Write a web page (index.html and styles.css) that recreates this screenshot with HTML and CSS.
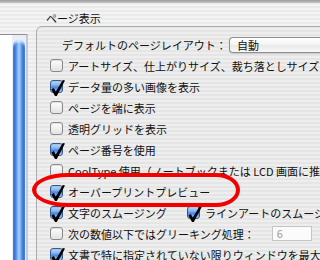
FILE: index.html
```html
<!DOCTYPE html>
<html>
<head>
<title>ページ表示</title>
<link rel="stylesheet" href="styles.css">
</head>

<body>

    <div class="topbar"></div>

    <div class="main">
        <div class="sidebar">
            <div class="list"></div>
            <div class="track"><div class="thumb"></div></div>
        </div>

        <div class="content">
            <div class="title">ページ表示</div>

            <div class="box">
                <div class="row indent">
                    <span class="label-fixed">デフォルトのページレイアウト：</span>
                    <span class="popup">自動</span>
                </div>

                <div class="row"><span class="cb"></span>アートサイズ、仕上がりサイズ、裁ち落としサイズを表示</div>
                <div class="row"><span class="cb on"><svg viewBox="0 -4 15 17"><path d="M1.3 9.5 L3.8 8 L5.8 11.4 L12.8 0 L15 0.5 L6.8 16 L5 16 Z"/></svg></span>データ量の多い画像を表示</div>
                <div class="row"><span class="cb"></span>ページを端に表示</div>
                <div class="row"><span class="cb"></span>透明グリッドを表示</div>
                <div class="row"><span class="cb on"><svg viewBox="0 -4 15 17"><path d="M1.3 9.5 L3.8 8 L5.8 11.4 L12.8 0 L15 0.5 L6.8 16 L5 16 Z"/></svg></span>ページ番号を使用</div>
                <div class="row"><span class="cb"></span>CoolType 使用（ノートブックまたは LCD 画面に推奨）</div>
                <div class="row"><span class="cb on"><svg viewBox="0 -4 15 17"><path d="M1.3 9.5 L3.8 8 L5.8 11.4 L12.8 0 L15 0.5 L6.8 16 L5 16 Z"/></svg></span>オーバープリントプレビュー</div>
                <div class="row">
                    <span class="pair"><span class="cb on"><svg viewBox="0 -4 15 17"><path d="M1.3 9.5 L3.8 8 L5.8 11.4 L12.8 0 L15 0.5 L6.8 16 L5 16 Z"/></svg></span>文字のスムージング</span>
                    <span class="cb on"><svg viewBox="0 -4 15 17"><path d="M1.3 9.5 L3.8 8 L5.8 11.4 L12.8 0 L15 0.5 L6.8 16 L5 16 Z"/></svg></span>ラインアートのスムージング
                </div>
                <div class="row"><span class="cb"></span>次の数値以下ではグリーキング処理：<span class="field">6</span></div>
                <div class="row"><span class="cb on"><svg viewBox="0 -4 15 17"><path d="M1.3 9.5 L3.8 8 L5.8 11.4 L12.8 0 L15 0.5 L6.8 16 L5 16 Z"/></svg></span>文書で特に指定されていない限りウィンドウを最大化</div>
            </div>
        </div>
    </div>

    <!-- red marker round the overprint option -->
    <div class="ring"></div>

</body>
</html>
```

FILE: styles.css
```css
    body {
        margin: 0;
        width: 320px;
        height: 260px;
        overflow: hidden;
        position: relative;
        font-family: "Noto Sans CJK JP", "Noto Sans", sans-serif;
        font-size: 11px;
        color: #111;
        background: repeating-linear-gradient(to bottom, #f3f3f3 0, #f3f3f3 2px, #eaeaea 2px, #eaeaea 4px);
    }

    .topbar {
        height: 3px;
        background: linear-gradient(#9c9c9c, #c6c6c6);
    }

    .main {
        display: flex;
        gap: 8px;
    }

    .sidebar {
        margin-top: 31px;
        width: 28px;
        height: 226px;
        display: flex;
        box-sizing: border-box;
        border-top: 1px solid #8e8e8e;
        border-right: 2px solid #bccbe2;
    }

    .list {
        width: 12px;
        background: #fff;
    }

    .track {
        width: 14px;
        box-sizing: border-box;
        padding: 5px 1px 0 1px;
        background: #e9eef6;
    }

    .thumb {
        height: 100%;
        border-radius: 6px 6px 0 0;
        background: linear-gradient(to right, #1b4fbf, #4f8fe8 25%, #a9d2ff 50%, #4f8fe8 75%, #1b4fbf);
        box-shadow: inset 0 2px 2px rgba(255,255,255,.7);
    }

    .content {
        flex: none;
        width: 300px;
        padding-top: 8px;
    }

    .title {
        height: 15px;
        line-height: 15px;
        padding-left: 10px;
        white-space: nowrap;
    }

    .box {
        height: 240px;
        box-sizing: border-box;
        border: 1px solid #aaaaaa;
        border-radius: 6px;
        padding: 7px 0 0 13px;
        background: rgba(0,0,0,.02);
    }

    .row {
        height: 21px;
        display: flex;
        align-items: center;
        white-space: nowrap;
    }

    .indent {
        padding-left: 12px;
    }

    .label-fixed {
        flex: none;
        width: 167px;
    }

    .popup {
        flex: 1;
        height: 16px;
        box-sizing: border-box;
        line-height: 14px;
        padding-left: 7px;
        border: 1px solid #8e8e8e;
        border-right: none;
        border-radius: 4px 0 0 4px;
        background: linear-gradient(#ffffff, #f4f4f4 50%, #e8e8e8 50%, #f8f8f8);
        box-shadow: 0 1px 1px rgba(0,0,0,.15);
    }

    .cb {
        position: relative;
        flex: none;
        width: 13px;
        height: 13px;
        box-sizing: border-box;
        margin-right: 5px;
        border: 1px solid #8a8a8a;
        border-radius: 3px;
        background: linear-gradient(#fdfdfd, #e3e3e3);
        box-shadow: inset 0 1px 1px rgba(0,0,0,.12);
    }

    .cb.on {
        border-color: #36598f;
        background: linear-gradient(#c6def9, #72aaee 45%, #3e84e4 55%, #a2ceff);
    }

    .cb svg {
        position: absolute;
        left: -1px;
        top: -5px;
        width: 15px;
        height: 17px;
        overflow: visible;
    }

    .pair {
        flex: none;
        width: 137px;
        display: flex;
        align-items: center;
    }

    .field {
        margin-left: 17px;
        width: 40px;
        height: 15px;
        box-sizing: border-box;
        padding-left: 4px;
        line-height: 13px;
        border: 1px solid #c4c4c4;
        background: #fbfbfb;
        color: #9a9a9a;
    }

    .ring {
        position: absolute;
        left: 32px;
        top: 173px;
        width: 208px;
        height: 34px;
        box-sizing: border-box;
        border: 4px solid #f20000;
        border-radius: 36px 24px 24px 36px / 17px;
    }
```
